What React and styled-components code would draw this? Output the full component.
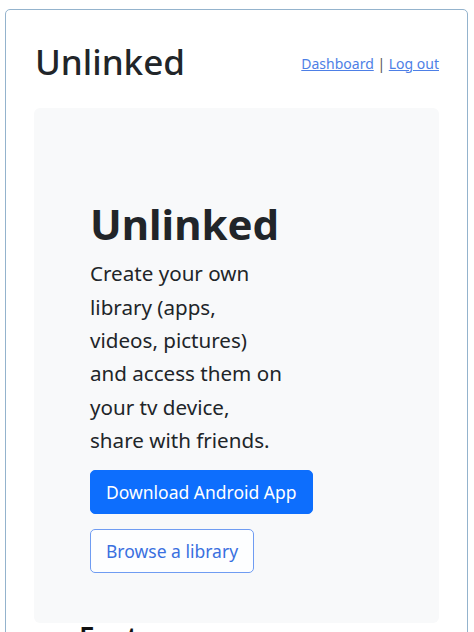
import React from "react";
import styled, { createGlobalStyle } from "styled-components";

const Global = createGlobalStyle`
  html, body { margin: 0; padding: 0; background: #fff; }
  body { font-family: "Noto Sans", "Open Sans", sans-serif; color: #212529; }
  * { box-sizing: border-box; }
`;

const Card = styled.div`
  margin: 9px 6px 0 5px;
  border: 1px solid #94b3cd;
  border-radius: 5px;
  padding: 0 28px;
  height: 640px;
  overflow: hidden;
`;

const Header = styled.header`
  display: flex;
  justify-content: space-between;
  align-items: center;
  padding-top: 6px;
  height: 98px;
`;

const Brand = styled.h1`
  margin: 0 0 0 1px;
  font-size: 35px;
  font-weight: 500;
  line-height: 1.2;
  color: #212529;
`;

const Nav = styled.nav`
  font-size: 14px;
  color: #555;
  margin-top: 2px;
`;

const NavLink = styled.a`
  color: #4d7fe6;
  text-decoration: underline;
`;

const Hero = styled.section`
  background: #f8f9fa;
  border-radius: 6px;
  padding: 91px 56px 50px;
`;

const HeroTitle = styled.h2`
  margin: 0 0 8px;
  font-size: 42px;
  font-weight: 700;
  line-height: 1.2;
  color: #212529;
`;

const Lead = styled.p`
  margin: 0 0 13px;
  font-size: 20.6px;
  line-height: 33.3px;
  color: #212529;
`;

const Actions = styled.div`
  display: flex;
  flex-direction: column;
  align-items: flex-start;
  gap: 15px;
`;

const Button = styled.a`
  display: inline-flex;
  align-items: center;
  height: 44px;
  padding: 0 15px;
  border-radius: 5px;
  font-size: 17.5px;
  text-decoration: none;
  border: 1px solid ${(p) => (p.$outline ? "#6f9cf2" : "#0d6efd")};
  background: ${(p) => (p.$outline ? "#fdfeff" : "#0d6efd")};
  color: ${(p) => (p.$outline ? "#3a70e0" : "#fff")};
`;

const SectionTitle = styled.h3`
  margin: 0 0 0 45px;
  font-size: 28px;
  line-height: 1;
  font-weight: 600;
  color: #111;
`;

export default function App() {
  return (
    <>
      <Global />
      <Card>
        <Header>
          <Brand>Unlinked</Brand>
          <Nav>
            <NavLink href="#">Dashboard</NavLink> | <NavLink href="#">Log out</NavLink>
          </Nav>
        </Header>
        <Hero>
          <HeroTitle>Unlinked</HeroTitle>
          <Lead>
            Create your own
            <br />
            library (apps,
            <br />
            videos, pictures)
            <br />
            and access them on
            <br />
            your tv device,
            <br />
            share with friends.
          </Lead>
          <Actions>
            <Button href="#">Download Android App</Button>
            <Button href="#" $outline>
              Browse a library
            </Button>
          </Actions>
        </Hero>
        <SectionTitle>Features</SectionTitle>
      </Card>
    </>
  );
}
